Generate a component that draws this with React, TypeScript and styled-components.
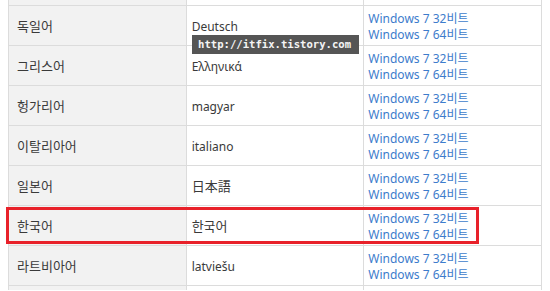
import React from "react";
import styled, { createGlobalStyle } from "styled-components";

const Global = createGlobalStyle`
  html, body { margin: 0; padding: 0; background: #ffffff; }
  body { font-family: "Noto Sans", "Noto Sans CJK KR", sans-serif; }
`;

const Viewport = styled.div`
  position: relative;
  width: 550px;
  height: 291px;
  overflow: hidden;
  padding-left: 8px;
  box-sizing: border-box;
`;

const Table = styled.table`
  border-collapse: collapse;
  table-layout: fixed;
  width: 534px;
`;

const EdgeRow = styled.tr`
  height: 5px;
`;

const EdgeCell = styled.td<{ $shade?: boolean; $side: "top" | "bottom" }>`
  padding: 0;
  height: 4px;
  border: 1px solid #dcdcdc;
  border-${(p) => p.$side}: none;
  background: ${(p) => (p.$shade ? "#f2f2f2" : "#ffffff")};
`;

const Row = styled.tr`
  height: 40px;
`;

const Cell = styled.td<{ $pad: number; $shade?: boolean }>`
  border: 1px solid #dcdcdc;
  padding: 5px 2px 2px ${(p) => p.$pad}px;
  background: ${(p) => (p.$shade ? "#f2f2f2" : "#ffffff")};
  color: #3a3a3a;
  font-size: 12px;
  line-height: 16px;
  vertical-align: middle;
  white-space: nowrap;
  overflow: hidden;
`;

const KoText = styled.span`
  font-family: "Noto Sans CJK KR", sans-serif;
  font-size: 13px;
`;

const Native = styled.span<{ $cjk?: boolean }>`
  font-family: ${(p) =>
    p.$cjk ? `"Noto Sans CJK KR", "Noto Sans CJK JP", sans-serif` : `"Noto Sans", sans-serif`};
  font-size: ${(p) => (p.$cjk ? "13px" : "12px")};
`;

const LinkList = styled.div`
  display: flex;
  flex-direction: column;
`;

const DownloadLink = styled.a`
  color: #3d7ccc;
  text-decoration: none;
  font-family: "Noto Sans", "Noto Sans CJK KR", sans-serif;
  font-size: 12px;
  line-height: 16px;
`;

const Watermark = styled.div`
  position: absolute;
  left: 192px;
  top: 35px;
  width: 167px;
  height: 19px;
  background: #555555;
  color: #f4f4f4;
  font-family: "DejaVu Sans Mono", monospace;
  font-size: 10.6px;
  font-weight: bold;
  line-height: 19px;
  padding-left: 6px;
  box-sizing: border-box;
  white-space: nowrap;
`;

const Highlight = styled.div`
  position: absolute;
  left: 6px;
  top: 207px;
  width: 473px;
  height: 37px;
  border: 3px solid #e8212a;
  box-sizing: border-box;
  pointer-events: none;
`;

type Lang = { ko: string; native: string; cjk?: boolean };

const langs: Lang[] = [
  { ko: "독일어", native: "Deutsch" },
  { ko: "그리스어", native: "Ελληνικά" },
  { ko: "헝가리어", native: "magyar" },
  { ko: "이탈리아어", native: "italiano" },
  { ko: "일본어", native: "日本語", cjk: true },
  { ko: "한국어", native: "한국어", cjk: true },
  { ko: "라트비아어", native: "latviešu" },
];

const Edge = ({ side }: { side: "top" | "bottom" }) => (
  <EdgeRow>
    <EdgeCell $side={side} $shade />
    <EdgeCell $side={side} />
    <EdgeCell $side={side} />
  </EdgeRow>
);

export default function App() {
  return (
    <>
      <Global />
      <Viewport>
        <Table>
          <tbody>
            <Edge side="top" />
            {langs.map((l) => (
              <Row key={l.ko}>
                <Cell $pad={8} $shade>
                  <KoText>{l.ko}</KoText>
                </Cell>
                <Cell $pad={5}>
                  <Native $cjk={l.cjk}>{l.native}</Native>
                </Cell>
                <Cell $pad={4}>
                  <LinkList>
                    <DownloadLink href="#">Windows 7 32비트</DownloadLink>
                    <DownloadLink href="#">Windows 7 64비트</DownloadLink>
                  </LinkList>
                </Cell>
              </Row>
            ))}
            <Edge side="bottom" />
          </tbody>
        </Table>
        <Watermark>http://itfix.tistory.com</Watermark>
        <Highlight />
      </Viewport>
    </>
  );
}
